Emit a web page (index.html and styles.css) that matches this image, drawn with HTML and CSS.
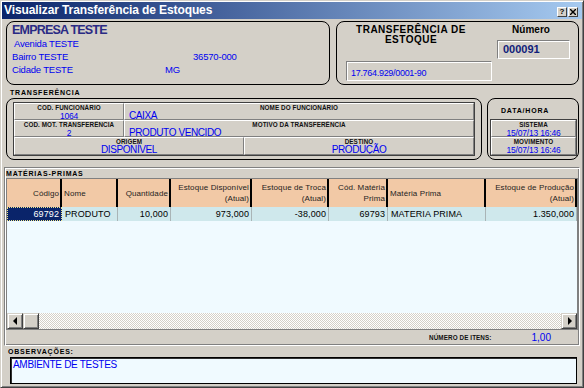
FILE: index.html
```html
<!DOCTYPE html>
<html lang="pt-BR">
<head>
    <meta charset="UTF-8">
    <title>Visualizar Transferência de Estoques</title>
    <link rel="stylesheet" href="styles.css">
</head>
<body>
    <div class="window">
        <div class="titlebar">
            <span class="title">Visualizar Transferência de Estoques</span>
            <div class="caption-btns">
                <span class="cbtn">?</span>
                <span class="cbtn">
                    <svg width="6" height="6" viewBox="0 0 6 6"><path d="M0 0L6 6M6 0L0 6" stroke="#000" stroke-width="1.4"/></svg>
                </span>
            </div>
        </div>

        <div class="content">
            <div class="top-row">
                <div class="rbox company">
                    <div class="company-name">EMPRESA TESTE</div>
                    <div class="addr street">Avenida TESTE</div>
                    <div class="addr"><span class="col-bairro">Bairro TESTE</span><span>36570-000</span></div>
                    <div class="addr"><span class="col-cidade">Cidade TESTE</span><span>MG</span></div>
                </div>
                <div class="rbox doc">
                    <div class="doc-left">
                        <div class="doc-title">TRANSFERÊNCIA DE<br>ESTOQUE</div>
                        <div class="sunken cnpj">17.764.929/0001-90</div>
                    </div>
                    <div class="doc-right">
                        <div class="num-label">Número</div>
                        <div class="sunken num">000091</div>
                    </div>
                </div>
            </div>

            <div class="caption transfer-title">TRANSFERÊNCIA</div>

            <div class="mid-row">
                <div class="rbox transfer">
                    <div class="panel tpanel">
                        <div class="cell">
                            <div class="lbl">COD. FUNCIONÁRIO</div>
                            <div class="val">1064</div>
                        </div>
                        <div class="cell">
                            <div class="lbl">NOME DO FUNCIONÁRIO</div>
                            <div class="val big left">CAIXA</div>
                        </div>
                        <div class="cell">
                            <div class="lbl">COD. MOT. TRANSFERÊNCIA</div>
                            <div class="val">2</div>
                        </div>
                        <div class="cell">
                            <div class="lbl">MOTIVO DA TRANSFERÊNCIA</div>
                            <div class="val big left">PRODUTO VENCIDO</div>
                        </div>
                        <div class="split">
                            <div class="cell">
                                <div class="lbl">ORIGEM</div>
                                <div class="val big">DISPONÍVEL</div>
                            </div>
                            <div class="cell">
                                <div class="lbl">DESTINO</div>
                                <div class="val big">PRODUÇÃO</div>
                            </div>
                        </div>
                    </div>
                </div>
                <div class="rbox datetime">
                    <div class="caption dt-title">DATA/HORA</div>
                    <div class="panel dpanel">
                        <div class="cell">
                            <div class="lbl">SISTEMA</div>
                            <div class="val">15/07/13 16:46</div>
                        </div>
                        <div class="cell">
                            <div class="lbl">MOVIMENTO</div>
                            <div class="val">15/07/13 16:46</div>
                        </div>
                    </div>
                </div>
            </div>

            <div class="materials">
                <div class="caption mat-title">MATÉRIAS-PRIMAS</div>
                <div class="grid">
                    <div class="grow ghead">
                        <div class="gh">Código</div>
                        <div class="gh left">Nome</div>
                        <div class="gh">Quantidade</div>
                        <div class="gh">Estoque Disponível<br>(Atual)</div>
                        <div class="gh">Estoque de Troca<br>(Atual)</div>
                        <div class="gh">Cód. Matéria<br>Prima</div>
                        <div class="gh left">Matéria Prima</div>
                        <div class="gh">Estoque de Produção<br>(Atual)</div>
                    </div>
                    <div class="grow gdata">
                        <div class="gd selected">69792</div>
                        <div class="gd left">PRODUTO</div>
                        <div class="gd">10,000</div>
                        <div class="gd">973,000</div>
                        <div class="gd">-38,000</div>
                        <div class="gd">69793</div>
                        <div class="gd left">MATERIA PRIMA</div>
                        <div class="gd">1.350,000</div>
                    </div>
                    <div class="gempty"></div>
                    <div class="hscroll">
                        <div class="sbtn"><span class="arrow-left"></span></div>
                        <div class="sbtn thumb"></div>
                        <div class="track"></div>
                        <div class="sbtn"><span class="arrow-right"></span></div>
                    </div>
                </div>
                <div class="count">
                    <span class="count-lbl">NÚMERO DE ITENS:</span>
                    <span class="count-val">1,00</span>
                </div>
            </div>

            <div class="caption obs-title">OBSERVAÇÕES:</div>
            <div class="obs">AMBIENTE DE TESTES</div>
        </div>
    </div>
</body>
</html>
```

FILE: styles.css
```css
:root {
    --face: #d4d0c8;
    --shadow: #808080;
    --dark: #404040;
    --blue: #0000f0;
    --navy: #0a246a;
}
* {
    box-sizing: border-box;
}
body {
    margin: 0;
    background: var(--face);
    font-family: "Liberation Sans", Arial, sans-serif;
    color: #000;
}
.window {
    width: 584px;
    height: 388px;
    display: flex;
    flex-direction: column;
    padding: 1px;
    background: var(--face);
    border: 1px solid;
    border-color: var(--face) var(--dark) var(--dark) var(--face);
    box-shadow: inset 1px 1px #fff, inset -1px -1px var(--shadow);
}

/* title bar */
.titlebar {
    height: 17px;
    display: flex;
    align-items: center;
    padding: 0 4px 0 2px;
    background: linear-gradient(to right, #0a246a, #a6caf0);
}
.title {
    color: #fff;
    font-weight: bold;
    font-size: 12px;
    letter-spacing: -0.1px;
    line-height: 17px;
    white-space: nowrap;
}
.caption-btns {
    margin-left: auto;
    display: flex;
    gap: 1px;
    margin-top: 2px;
}
.cbtn {
    width: 10px;
    height: 10px;
    display: flex;
    align-items: center;
    justify-content: center;
    background: var(--face);
    border: 1px solid;
    border-color: #fff var(--dark) var(--dark) #fff;
    font-size: 8px;
    font-weight: bold;
    line-height: 8px;
}

.content {
    flex: 1;
    display: flex;
    flex-direction: column;
    padding: 2px 3px 0 4px;
}

.rbox {
    border: 1px solid #000;
    border-radius: 8px;
}

/* header */
.top-row {
    display: flex;
    gap: 6px;
    height: 64px;
}
.company {
    width: 324px;
    padding: 1px 5px 0;
}
.company-name {
    color: #2a2a84;
    font-weight: bold;
    font-size: 12.5px;
    letter-spacing: -0.8px;
    line-height: 14px;
}
.addr {
    color: var(--blue);
    font-size: 9.5px;
    letter-spacing: -0.2px;
    line-height: 13px;
    display: flex;
}
.addr.street {
    padding-left: 2px;
}
.col-bairro {
    width: 181px;
}
.col-cidade {
    width: 153px;
}
.doc {
    flex: 1;
    display: flex;
}
.doc-left {
    width: 157px;
    padding-left: 9px;
}
.doc-title {
    width: 130px;
    margin-top: 3px;
    text-align: center;
    font-weight: bold;
    font-size: 10px;
    letter-spacing: 0.5px;
    line-height: 10px;
}
.sunken {
    border: 1px solid;
    border-color: var(--shadow) #fff #fff var(--shadow);
    box-shadow: inset 1px 1px #fff;
}
.cnpj {
    width: 146px;
    height: 20px;
    margin-top: 16px;
    padding: 4px 0 0 4px;
    color: var(--blue);
    font-size: 9px;
    letter-spacing: -0.3px;
    line-height: 14px;
}
.doc-right {
    margin-left: 3px;
    width: 73px;
}
.num-label {
    margin-top: 3px;
    padding-right: 5px;
    text-align: center;
    font-weight: bold;
    font-size: 10px;
    line-height: 10px;
}
.num {
    margin-top: 5px;
    height: 19px;
    padding-left: 5px;
    color: #10207a;
    font-weight: bold;
    font-size: 11px;
    line-height: 17px;
}

/* small pixel-like captions */
.caption {
    font-weight: bold;
    font-size: 7px;
    letter-spacing: 0.8px;
    line-height: 8px;
    white-space: nowrap;
}
.transfer-title {
    margin: 4px 0 0 4px;
}

/* transfer info */
.mid-row {
    display: flex;
    gap: 5px;
    height: 62px;
    margin-top: 1px;
}
.transfer {
    width: 476px;
    padding: 3px 6px;
}
.panel {
    border: 1px solid var(--dark);
}
.tpanel {
    height: 54px;
    display: grid;
    grid-template-columns: 110px 1fr;
    grid-template-rows: 17px 17px 18px;
}
.cell {
    border: 1px solid;
    border-color: #fff var(--shadow) var(--shadow) #fff;
    overflow: hidden;
}
.split {
    grid-column: 1 / 3;
    display: grid;
    grid-template-columns: 1fr 1fr;
}
.lbl {
    text-align: center;
    font-weight: bold;
    font-size: 6.3px;
    letter-spacing: 0.1px;
    line-height: 8px;
    color: #111;
    white-space: nowrap;
}
.val {
    text-align: center;
    color: var(--blue);
    font-size: 8.5px;
    letter-spacing: -0.2px;
    line-height: 8px;
    white-space: nowrap;
}
.val.big {
    font-size: 10px;
    letter-spacing: -0.4px;
}
.val.left {
    text-align: left;
    padding-left: 4px;
}
.datetime {
    flex: 1;
    padding: 0 1px 3px 2px;
    display: flex;
    flex-direction: column;
}
.dt-title {
    margin: 8px 0 4px 11px;
}
.dpanel {
    height: 37px;
    display: grid;
    grid-template-rows: 17px 18px;
}

/* materials grid */
.materials {
    margin: 7px -1px 0 -2px;
    height: 179px;
    border: 1px solid;
    border-color: var(--shadow) #fff #fff var(--shadow);
    box-shadow: inset 1px 1px #fff, inset -1px -1px var(--shadow);
    display: flex;
    flex-direction: column;
}
.mat-title {
    padding: 2px 0 0 1px;
    height: 10px;
    line-height: 8px;
}
.grid {
    margin: 0 1px;
    height: 152px;
    border: 1px solid var(--shadow);
    display: flex;
    flex-direction: column;
    background: #f0faff;
}
.grow {
    display: grid;
    grid-template-columns: 55px 56px 53px 81px 77px 59px 98px 91px;
}
.ghead {
    height: 28px;
    background: #f2c9a6;
}
.gh {
    display: flex;
    flex-direction: column;
    justify-content: center;
    align-items: flex-end;
    text-align: right;
    padding: 0 1px 0 2px;
    border-right: 2px solid #000;
    color: #1e1e1e;
    font-size: 8px;
    letter-spacing: 0.1px;
    line-height: 11px;
    white-space: nowrap;
}
.gh.left, .gd.left {
    align-items: flex-start;
    text-align: left;
}
.gh.left {
    padding-left: 2px;
}
.gdata {
    height: 14px;
    background: #cfe8ec;
}
.gd {
    text-align: right;
    padding: 0 2px;
    border-right: 1px solid #a9b4b6;
    font-size: 9px;
    letter-spacing: 0.1px;
    line-height: 14px;
    white-space: nowrap;
}
.gd.left {
    padding-left: 3px;
}
.gd.selected {
    background: var(--navy);
    color: #fff;
    outline: 1px dotted #f0e68c;
    outline-offset: -1px;
    border-right-color: var(--navy);
}
.gempty {
    flex: 1;
}
.hscroll {
    height: 16px;
    display: flex;
}
.sbtn {
    width: 16px;
    height: 16px;
    display: flex;
    align-items: center;
    justify-content: center;
    background: var(--face);
    border: 1px solid;
    border-color: var(--face) var(--dark) var(--dark) var(--face);
    box-shadow: inset 1px 1px #fff, inset -1px -1px var(--shadow);
}
.track {
    flex: 1;
    background: repeating-conic-gradient(#fff 0 25%, var(--face) 0 50%) 0 0 / 2px 2px;
}
.arrow-left, .arrow-right {
    width: 0;
    height: 0;
    border-top: 4px solid transparent;
    border-bottom: 4px solid transparent;
}
.arrow-left {
    border-right: 4px solid #000;
    margin-right: 1px;
}
.arrow-right {
    border-left: 4px solid #000;
    margin-left: 1px;
}
.count {
    height: 15px;
    display: flex;
    align-items: center;
    justify-content: flex-end;
    padding-right: 28px;
}
.count-lbl {
    font-weight: bold;
    font-size: 6.3px;
    letter-spacing: 0.1px;
    line-height: 8px;
    color: #111;
}
.count-val {
    margin-left: 40px;
    color: var(--blue);
    font-size: 10px;
    line-height: 12px;
}

/* observations */
.obs-title {
    margin: 2px 0 0 2px;
}
.obs {
    margin: 1px 2px 0 4px;
    height: 27px;
    padding: 1px 0 0 2px;
    border: 1px solid #000;
    box-shadow: inset 1px 1px #303030;
    background: #f0faff;
    color: var(--blue);
    font-size: 10px;
    letter-spacing: -0.3px;
    line-height: 11px;
}
```
